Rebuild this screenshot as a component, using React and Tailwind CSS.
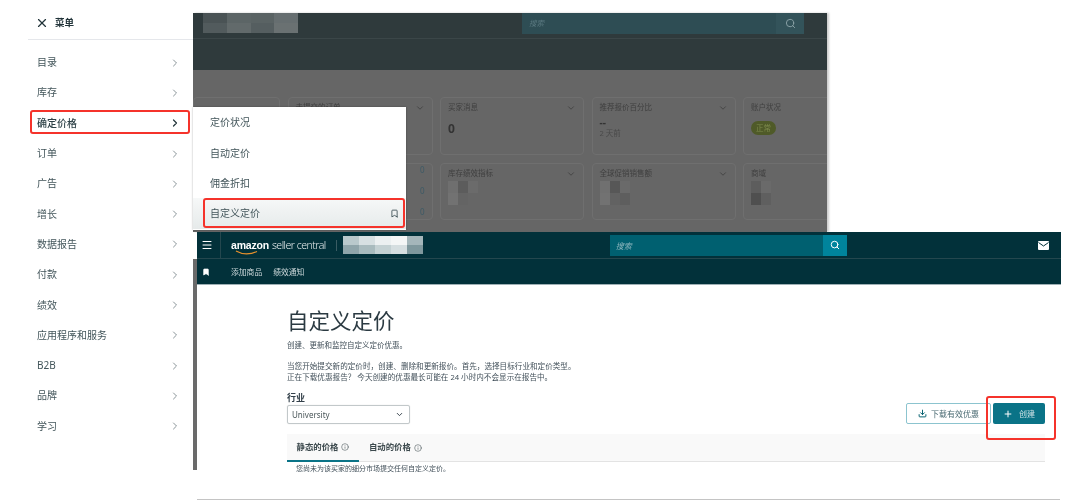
import { ChevronRight, ChevronDown, X, Menu, Search, Bookmark, Download, Plus, Info } from "lucide-react";

const font = { fontFamily: '"Noto Sans", "Noto Sans CJK SC", sans-serif' };

const menuItems = ["目录", "库存", "确定价格", "订单", "广告", "增长", "数据报告", "付款", "绩效", "应用程序和服务", "B2B", "品牌", "学习"];

// mosaic used where the original screenshot was blurred out
const Mosaic = ({ cols, cells, className }) => (
  <div className={`grid ${cols} ${className}`}>
    {cells.map((c, i) => (
      <div key={i} style={{ backgroundColor: c }} />
    ))}
  </div>
);

const Sidebar = () => (
  <div className="absolute left-[28px] top-[13px] w-[165px] bg-white">
    <div className="h-[27px] flex items-center gap-[6px] pl-[7px] pb-[6px] border-b border-gray-200">
      <X size={14} strokeWidth={2} className="text-[#22343a]" />
      <span className="text-[9.5px] font-bold text-[#22343a]">菜单</span>
    </div>
    <div className="pt-[7.5px]">
      {menuItems.map((item) => (
        <div key={item} className="h-[30.3px] flex items-center justify-between pl-[9px] pr-[12px]">
          <span className={`text-[10px] ${item === "确定价格" ? "text-[#2c4046] font-medium" : "text-[#42555a]"}`}>{item}</span>
          <ChevronRight size={12} strokeWidth={item === "确定价格" ? 2.4 : 1.8} className={item === "确定价格" ? "text-[#22343a]" : "text-[#7d898d]"} />
        </div>
      ))}
    </div>
  </div>
);

const DimCard = ({ title, children, noChevron }) => (
  <div className="border border-[#6f6f6f] rounded-[4px] px-[7px] pt-[4px] overflow-hidden">
    <div className="flex items-center justify-between">
      <span className="text-[7.5px] text-[#3f3f3f]">{title}</span>
      {!noChevron && <ChevronDown size={10} strokeWidth={2} className="text-[#3f3f3f]" />}
    </div>
    {children}
  </div>
);

const BackWindow = () => (
  <div className="absolute left-[193px] top-[13px] w-[634px] h-[219px] bg-[#666666] overflow-hidden shadow-[2px_0_2px_rgba(0,0,0,0.2)]">
    <div className="h-[57px] bg-[#2f3a3c]">
      <div className="h-[26px] flex items-center justify-between pl-[10px] pr-[23px] border-b border-[#3b4648]">
        <Mosaic
          cols="grid-cols-4"
          className="w-[95px] h-[20px] -mt-[5px] rounded-bl-[8px]"
          cells={["#4a5355", "#5c6566", "#5a6364", "#666e70", "#525b5d", "#626a6b", "#555e60", "#6a7172"]}
        />
        <div className="w-[282px] h-[22px] -mt-[5px] flex bg-[#2e4d54]">
          <span className="flex-1 pl-[7px] text-[7.5px] leading-[22px] italic text-[#5a7980]">搜索</span>
          <div className="w-[28px] flex items-center justify-center bg-[#33535a]">
            <Search size={11} strokeWidth={2} className="text-[#8ea5aa]" />
          </div>
        </div>
      </div>
    </div>
    <div className="pt-[27px] grid grid-cols-[87px_145px_144px_144px_100px] grid-rows-[58px_57px] gap-x-[7.5px] gap-y-[8px]">
      <div className="border border-[#6f6f6f] rounded-[4px]" />
      <DimCard title="未提交的订单" />
      <DimCard title="买家消息">
        <p className="mt-[7px] text-[12px] font-bold text-[#333333]">0</p>
      </DimCard>
      <DimCard title="推荐报价百分比">
        <p className="mt-[3px] text-[10px] leading-[12px] font-bold text-[#333333]">--</p>
        <p className="text-[7.5px] text-[#4a4a4a]">2 天前</p>
      </DimCard>
      <DimCard title="账户状况" noChevron>
        <span className="inline-block mt-[8px] px-[5px] py-[2px] rounded-full bg-[#4f5a28] text-[7.5px] leading-[10px] text-[#7d8a4c]">正常</span>
      </DimCard>
      <div />
      <div className="border border-[#6f6f6f] rounded-[4px] flex flex-col items-end gap-[9px] pr-[7px]">
        <span className="text-[8px] leading-[12px] text-[#3e5a66]">0</span>
        <span className="text-[8px] leading-[12px] text-[#3e5a66]">0</span>
        <span className="text-[8px] leading-[12px] text-[#3e5a66]">0</span>
      </div>
      <DimCard title="库存绩效指标">
        <Mosaic cols="grid-cols-3" className="w-[30px] h-[24px] mt-[2px]" cells={["#6f6f6f", "#5c5c5c", "#6b6b6b", "#727272", "#646464", "#666666"]} />
      </DimCard>
      <DimCard title="全球促销销售额">
        <Mosaic cols="grid-cols-3" className="w-[30px] h-[24px] mt-[2px]" cells={["#707070", "#575757", "#6a6a6a", "#727272", "#626262", "#5e5e5e"]} />
      </DimCard>
      <DimCard title="商域" noChevron>
        <Mosaic cols="grid-cols-2" className="w-[20px] h-[24px] mt-[2px]" cells={["#5d5d5d", "#6a6a6a", "#4f4f4f", "#5f5f5f"]} />
      </DimCard>
    </div>
  </div>
);

const Flyout = () => (
  <div className="absolute left-[193px] top-[107px] w-[213px] h-[123px] bg-white text-[10px] text-[#42555a] shadow-[0_0_2px_rgba(0,0,0,0.3)]">
    <div className="h-[31px] flex items-center pl-[17px]">定价状况</div>
    <div className="h-[30px] flex items-center pl-[17px]">自动定价</div>
    <div className="h-[30.3px] flex items-center pl-[17px]">佣金折扣</div>
    <div className="h-[30.3px] flex items-center justify-between pl-[17px] pr-[7px] bg-gradient-to-b from-[#f6f8f8] to-[#e6eaea]">
      <span>自定义定价</span>
      <Bookmark size={9} strokeWidth={2.2} className="text-[#33474c]" />
    </div>
  </div>
);

const FrontWindow = () => (
  <div className="absolute left-[197px] top-[232px] w-[864px] h-[240px] bg-white">
    <div className="bg-[#02313a] h-[53px] border-b border-[#9fb0b5]">
      <div className="h-[27px] flex items-center border-b border-[#24474e]">
        <div className="w-[24px] h-full flex items-center pl-[4px] border-r border-[#24474e]">
          <Menu size={12} strokeWidth={2} className="text-white" />
        </div>
        <div className="ml-[10px] relative flex items-baseline gap-[3px] text-white leading-none">
          <span className="text-[10.5px] font-bold tracking-[-0.2px]" style={{ fontFamily: '"Liberation Sans", sans-serif' }}>amazon</span>
          <span className="text-[10.5px] font-light tracking-[-0.5px] text-[#e6eced]">seller central</span>
          <svg className="absolute left-[4px] top-[10px]" width="24" height="5" viewBox="0 0 24 5">
            <path d="M1 1c6 3.4 14 3.6 21 .4" fill="none" stroke="#e8912d" strokeWidth="1.1" />
          </svg>
        </div>
        <div className="ml-[10px] w-px h-[11px] bg-[#3a5c63]" />
        <Mosaic
          cols="grid-cols-5"
          className="ml-[6px] w-[80px] h-[18px] rounded-l-[5px]"
          cells={["#b9c9cc", "#d7e0e2", "#ecf0f1", "#f4f6f6", "#a4b6ba", "#8fa5aa", "#a9bbbe", "#c4d1d3", "#d5dee0", "#7f989d"]}
        />
        <div className="ml-[187px] w-[237px] h-[21px] flex bg-[#006070]">
          <span className="flex-1 pl-[6px] text-[8px] leading-[21px] italic text-[#8bb5bd]">搜索</span>
          <div className="w-[24px] flex items-center justify-center bg-[#00849c]">
            <Search size={10} strokeWidth={2.4} className="text-white" />
          </div>
        </div>
        <svg className="ml-auto mr-[12px]" width="11" height="9" viewBox="0 0 11 9">
          <rect width="11" height="9" rx="1" fill="white" />
          <path d="M0.5 1.5 5.5 5l5-3.5" fill="none" stroke="#02313a" strokeWidth="1" />
        </svg>
      </div>
      <div className="h-[25px] pt-[3px] flex items-center text-[7.8px] text-[#cfdadc]">
        <div className="w-[24px] flex justify-center -ml-[3px] mr-[3px] -mt-[2px]">
          <Bookmark size={8} fill="white" className="text-white" />
        </div>
        <span className="ml-[10px]">添加商品</span>
        <span className="ml-[11px]">绩效通知</span>
      </div>
    </div>
    <div className="pl-[90px] pr-[16px] text-[#42505a]">
      <h1 className="mt-[22px] text-[21.5px] leading-[28px] text-[#2b3a42]">自定义定价</h1>
      <p className="mt-[5px] text-[7.5px] leading-[11px]">创建、更新和监控自定义定价优惠。</p>
      <p className="mt-[10px] text-[7.6px] leading-[11px]">当您开始提交新的定价时，创建、删除和更新报价。首先，选择目标行业和定价类型。</p>
      <p className="text-[7.6px] leading-[11px]">正在下载优惠报告？ 今天创建的优惠最长可能在 24 小时内不会显示在报告中。</p>
      <div className="flex items-end justify-between mt-[9px]">
        <div>
          <p className="text-[9px] leading-[12px] font-bold text-[#33404a]">行业</p>
          <div className="w-[123px] h-[19px] mt-[1px] flex items-center justify-between pl-[4px] pr-[5px] border border-[#c2c8ca] rounded-[2px] shadow-[0_0_1px_rgba(0,0,0,0.2)] text-[8px] text-[#4a5659]">
            University
            <ChevronDown size={9} strokeWidth={2.5} className="text-[#33404a]" />
          </div>
        </div>
        <div className="flex gap-[2px]">
          <button className="w-[85px] h-[21px] flex items-center justify-center gap-[4px] border border-[#8cc4cf] rounded-[2px] text-[8px] text-[#4a6a72]">
            <Download size={9} strokeWidth={2.6} className="text-[#04606f]" />
            下载有效优惠
          </button>
          <button className="w-[52px] h-[21px] flex items-center justify-center gap-[6px] bg-[#0a7387] rounded-[2px] text-[8px] text-[#cfe3e7]">
            <Plus size={10} strokeWidth={2.4} className="text-white" />
            创建
          </button>
        </div>
      </div>
      <div className="mt-[10px] h-[28px] flex bg-[#f9f9f9] border-b border-[#e3e3e3] text-[8.4px] font-bold text-[#3c494d]">
        <div className="w-[72px] h-[28px] flex items-center justify-center gap-[3px] border-b-2 border-[#0a7387]">
          静态的价格
          <Info size={8} strokeWidth={1.6} />
        </div>
        <div className="ml-[10px] flex items-center gap-[3px]">
          自动的价格
          <Info size={8} strokeWidth={1.6} />
        </div>
      </div>
      <p className="mt-[2px] pl-[9px] text-[7px] leading-[10px]">您尚未为该买家的细分市场提交任何自定义定价。</p>
    </div>
  </div>
);

export default function App() {
  return (
    <div className="relative w-[1080px] h-[504px] bg-white overflow-hidden blur-[0.45px]" style={font}>
      <Sidebar />
      <BackWindow />
      <Flyout />
      <div className="absolute left-[193px] top-[259px] w-[4px] h-[211px] bg-[#6a6a6a]" />
      <FrontWindow />
      <div className="absolute left-[197px] top-[499px] w-[863px] h-px bg-[#c4c4c4]" />
      {/* red highlight boxes drawn over the collage */}
      <div className="absolute left-[30px] top-[110px] w-[160px] h-[24px] border-2 border-[#f5332b] rounded-[3px]" />
      <div className="absolute left-[203px] top-[198px] w-[202px] h-[30px] border-2 border-[#f5332b] rounded-[3px]" />
      <div className="absolute left-[986px] top-[396px] w-[70px] h-[44px] border-2 border-[#f5332b] rounded-[3px]" />
    </div>
  );
}
